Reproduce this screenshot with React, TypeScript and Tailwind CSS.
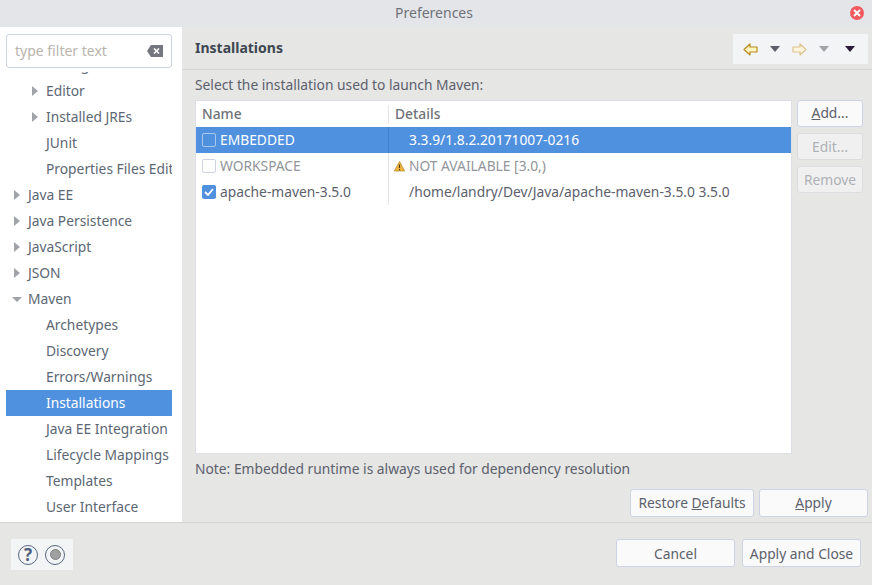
const font = { fontFamily: '"Noto Sans", sans-serif' };

type TreeRow = { label: string; indent: 0 | 1 | 2; arrow?: "right" | "down"; selected?: boolean };

const treeRows: TreeRow[] = [
  { label: "Debug", indent: 2, arrow: "right" },
  { label: "Editor", indent: 2, arrow: "right" },
  { label: "Installed JREs", indent: 2, arrow: "right" },
  { label: "JUnit", indent: 2 },
  { label: "Properties Files Editor", indent: 2 },
  { label: "Java EE", indent: 1, arrow: "right" },
  { label: "Java Persistence", indent: 1, arrow: "right" },
  { label: "JavaScript", indent: 1, arrow: "right" },
  { label: "JSON", indent: 1, arrow: "right" },
  { label: "Maven", indent: 1, arrow: "down" },
  { label: "Archetypes", indent: 2 },
  { label: "Discovery", indent: 2 },
  { label: "Errors/Warnings", indent: 2 },
  { label: "Installations", indent: 2, selected: true },
  { label: "Java EE Integration", indent: 2 },
  { label: "Lifecycle Mappings", indent: 2 },
  { label: "Templates", indent: 2 },
  { label: "User Interface", indent: 2 },
];

function Arrow({ down }: { down?: boolean }) {
  return (
    <svg width="10" height="12" viewBox="0 0 10 12" className="shrink-0">
      {down ? <path d="M0 4h10L5 9z" fill="#a0a4a8" /> : <path d="M2 1l6 5-6 5z" fill="#a0a4a8" />}
    </svg>
  );
}

function Tree() {
  return (
    <div className="mt-[4px] h-[448px] overflow-hidden">
      <div className="-mt-[20px]">
        {treeRows.map((row) => (
          <div
            key={row.label}
            className={`flex h-[26px] w-[166px] items-center overflow-hidden whitespace-nowrap text-[13.8px] ${
              row.selected ? "bg-[#4f91df] text-white" : "text-[#5c6773]"
            } ${row.indent === 2 ? "pl-[24px]" : "pl-[6px]"}`}
          >
            <span className="flex w-[16px] shrink-0 items-center">
              {row.arrow && <Arrow down={row.arrow === "down"} />}
            </span>
            <span>{row.label}</span>
          </div>
        ))}
      </div>
    </div>
  );
}

function Btn({ children, className }: { children: React.ReactNode; className: string }) {
  return (
    <div
      className={`flex items-center justify-center rounded-[3px] border border-[#cdd3e4] bg-[#fafafb] text-[13.8px] text-[#5c616c] ${className}`}
    >
      {children}
    </div>
  );
}

function SideBtn({ label, disabled }: { label: React.ReactNode; disabled?: boolean }) {
  return (
    <div
      className={`flex h-[27px] w-[66px] items-center justify-center rounded-[3px] border text-[13.8px] ${
        disabled ? "border-[#dcdde0] bg-[#f0f0f0] pt-[2px] text-[#aeb1b6]" : "border-[#cdd3e4] bg-[#fafafb] text-[#5c616c]"
      }`}
    >
      {label}
    </div>
  );
}

function Caret({ color }: { color: string }) {
  return (
    <svg width="10" height="6" viewBox="0 0 10 6">
      <path d="M0 0h10L5 6z" fill={color} />
    </svg>
  );
}

function NavArrow({ left, faded }: { left?: boolean; faded?: boolean }) {
  return (
    <svg width="15" height="13" viewBox="0 0 15 13" className={left ? "" : "-scale-x-100"}>
      <path
        d="M1 6.5L7 1v3h7v5H7v3z"
        fill={faded ? "#fdf6de" : "#fff3bf"}
        stroke={faded ? "#dcc48e" : "#b98a1e"}
        strokeWidth="1.2"
        strokeLinejoin="round"
      />
    </svg>
  );
}

function Check({ state }: { state: "on" | "off" | "sel" }) {
  if (state === "on")
    return (
      <span className="flex size-[14px] items-center justify-center rounded-[2px] bg-[#4f91df]">
        <svg width="10" height="8" viewBox="0 0 10 8">
          <path d="M1 4l3 3 5-6" fill="none" stroke="#fff" strokeWidth="1.8" />
        </svg>
      </span>
    );
  return (
    <span
      className={`block size-[14px] rounded-[2px] border ${
        state === "sel" ? "border-[#a9c8ee] bg-[#4f91df]" : "border-[#cfd3e0] bg-white"
      }`}
    />
  );
}

function Row({
  name,
  details,
  check,
  selected,
  muted,
  warn,
}: {
  name: string;
  details: string;
  check: "on" | "off" | "sel";
  selected?: boolean;
  muted?: boolean;
  warn?: boolean;
}) {
  const color = selected ? "text-white" : muted ? "text-[#92959b]" : "text-[#5c616c]";
  return (
    <div className={`flex h-[26px] items-center text-[13.8px] ${selected ? "bg-[#4f91df]" : ""} ${color}`}>
      <div className="flex h-full w-[192px] items-center gap-[4px] pl-[6px]">
        <Check state={check} />
        <span>{name}</span>
      </div>
      <div className={`h-full w-px ${selected ? "bg-[#4083cc]" : "bg-[#e4e5e9]"}`} />
      <div className="flex items-center pl-[5px]">
        <span className="flex w-[15px] items-center">
          {warn && (
            <svg width="11" height="11" viewBox="0 0 11 11">
              <path d="M5.5 .5L10.7 10H.3z" fill="#f2b33d" stroke="#b5862a" strokeWidth=".7" strokeLinejoin="round" />
              <path d="M5.5 3.5v3.5M5.5 8v1.2" stroke="#4a3a18" strokeWidth="1.1" />
            </svg>
          )}
        </span>
        <span>{details}</span>
      </div>
    </div>
  );
}

export default function App() {
  return (
    <div className="flex h-[585px] w-[872px] flex-col overflow-hidden bg-[#e6e6e4]" style={font}>
      {/* title bar */}
      <div className="relative flex h-[27px] items-center justify-center bg-[#e4e5e9] pb-[2px] pr-[4px] text-[14px] text-[#6f7278]">
        Preferences
        <span className="absolute right-[8px] top-[6px] flex size-[14px] items-center justify-center rounded-full bg-[#f2595f]">
          <svg width="8" height="8" viewBox="0 0 8 8">
            <path d="M1 1l6 6M7 1L1 7" stroke="#fff" strokeWidth="2" />
          </svg>
        </span>
      </div>

      <div className="flex h-[495px]">
        {/* left tree */}
        <div className="h-full w-[182px] bg-white pl-[6px] pt-[7px]">
          <div className="flex h-[34px] w-[166px] items-center justify-between rounded-[3px] border border-[#cdd3e4] bg-white pb-[1px] pl-[8px] pr-[8px] text-[14px] text-[#b9b5ae]">
            <span>type filter text</span>
            <svg width="16" height="12" viewBox="0 0 16 12">
              <path d="M0 6l4-6h12v12H4z" fill="#74787e" />
              <path d="M7 3.5l5 5M12 3.5l-5 5" stroke="#fff" strokeWidth="1.6" />
            </svg>
          </div>
          <Tree />
        </div>

        {/* main pane */}
        <div className="flex h-full flex-1 flex-col">
          <div className="flex h-[43px] items-start justify-between border-b border-[#d4d4d2] pl-[13px] pr-[4px] pt-[7px]">
            <span className="pt-[3px] text-[14px] font-bold text-[#3d4650]">Installations</span>
            <div className="flex h-[30px] w-[135px] items-center gap-[12px] bg-[#f3f4f6] pl-[10px]">
              <NavArrow left />
              <Caret color="#5c5f68" />
              <NavArrow faded />
              <Caret color="#a2a4aa" />
              <span className="ml-[4px] flex">
                <Caret color="#2a1b3a" />
              </span>
            </div>
          </div>

          <div className="flex flex-1 flex-col pl-[13px] pr-[4px]">
            <div className="pt-[5px] text-[13.8px] leading-[20px] text-[#5c616c]">Select the installation used to launch Maven:</div>
            <div className="mt-[5px] flex gap-[5px]">
              <div className="h-[354px] w-[597px] border border-[#dcdfe6] bg-white">
                <div className="flex h-[26px] items-center text-[13.8px] font-medium text-[#6f7278]">
                  <div className="w-[192px] pl-[6px]">Name</div>
                  <div className="h-[18px] w-px bg-[#e4e5e9]" />
                  <div className="pl-[6px]">Details</div>
                </div>
                <Row name="EMBEDDED" details="3.3.9/1.8.2.20171007-0216" check="sel" selected />
                <Row name="WORKSPACE" details="NOT AVAILABLE [3.0,)" check="off" muted warn />
                <Row name="apache-maven-3.5.0" details="/home/landry/Dev/Java/apache-maven-3.5.0 3.5.0" check="on" />
              </div>
              <div className="flex flex-col gap-[6px]">
                <SideBtn
                  label={
                    <span>
                      <span className="underline">A</span>dd...
                    </span>
                  }
                />
                <SideBtn label="Edit..." disabled />
                <SideBtn label="Remove" disabled />
              </div>
            </div>
            <div className="pt-[5px] text-[13.8px] leading-[20px] text-[#5c616c]">Note: Embedded runtime is always used for dependency resolution</div>
            <div className="mt-[10px] flex justify-end gap-[5px]">
              <Btn className="h-[28px] w-[124px]">
                <span>
                  Restore <span className="underline">D</span>efaults
                </span>
              </Btn>
              <Btn className="h-[28px] w-[109px]">
                <span>
                  <span className="underline">A</span>pply
                </span>
              </Btn>
            </div>
          </div>
        </div>
      </div>

      {/* footer */}
      <div className="flex flex-1 items-start justify-between border-t border-[#d4d4d2] pl-[11px] pr-[11px] pt-[16px]">
        <div className="flex h-[31px] w-[62px] items-center gap-[7px] bg-[#f3f4f6] pl-[7px]">
          <span className="flex size-[20px] items-center justify-center rounded-full border-[1.5px] border-[#56667f] text-[17px] font-bold leading-none text-[#4f5f78]">
            ?
          </span>
          <span className="flex size-[20px] items-center justify-center rounded-full border-[1.5px] border-[#56667f]">
            <span className="block size-[11px] rounded-full border border-[#808080] bg-[#a0a0a0]" />
          </span>
        </div>
        <div className="flex gap-[7px]">
          <Btn className="h-[28px] w-[119px] pt-[2px]">Cancel</Btn>
          <Btn className="h-[28px] w-[119px] pt-[2px]">Apply and Close</Btn>
        </div>
      </div>
    </div>
  );
}
